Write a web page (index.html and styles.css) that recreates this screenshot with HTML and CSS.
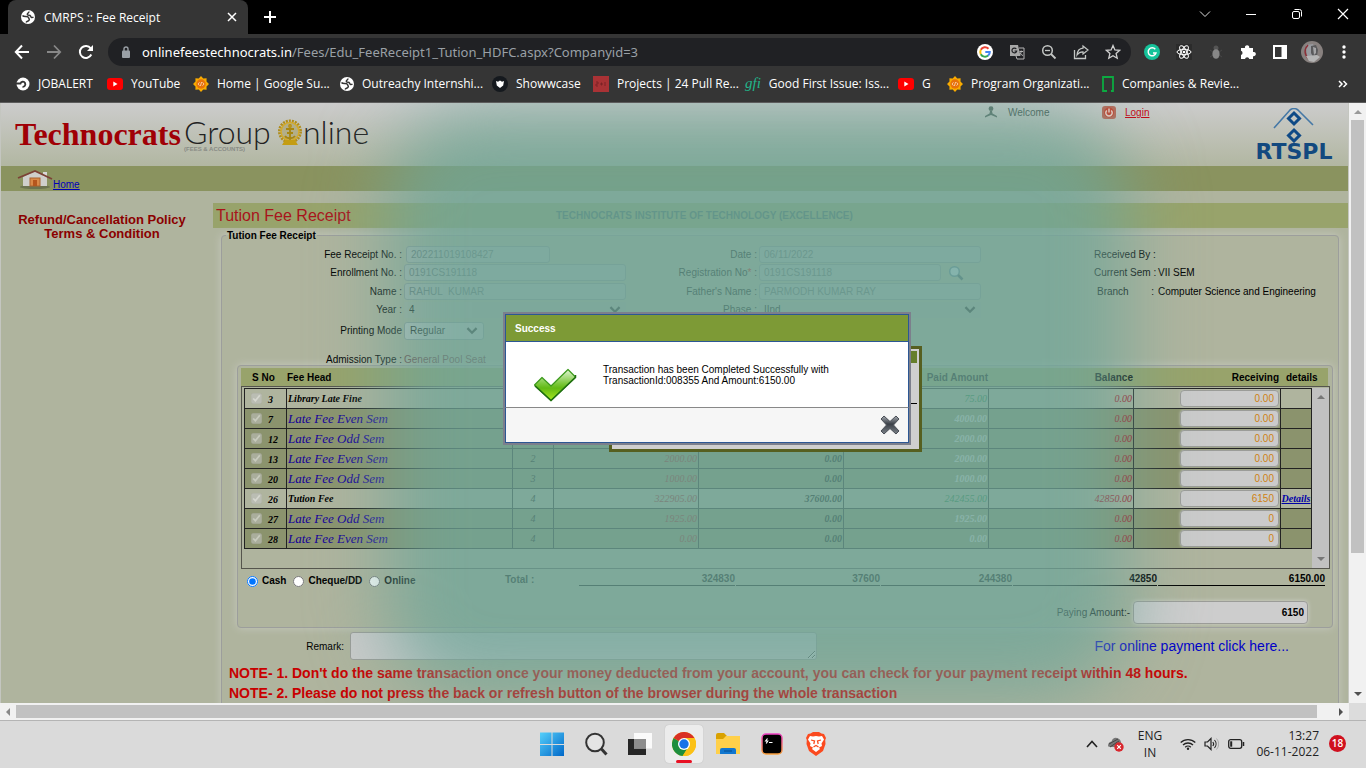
FILE: index.html
```html
<!DOCTYPE html>
<html lang="en">
<head>
<meta charset="utf-8">
<title>CMRPS :: Fee Receipt</title>
<link rel="stylesheet" href="styles.css">
</head>
<body>
<svg class="defs" aria-hidden="true">
  <defs>
    <symbol id="globe" viewBox="0 0 14 14"><circle cx="7" cy="7" r="7" fill="#fff"/><path d="M1.500 5.500C3 7.500 6.500 5.500 7.300 7.300S9 9 8 10.300 5.500 11 5.200 12.500M12.500 7C11 8 10 7.500 9.500 6S6.500 6 6.300 4.500 8 3 8 1.500" fill="none" stroke="#353535" stroke-width="1.500"/></symbol>
    <symbol id="yt" viewBox="0 0 16 12"><rect width="16" height="12" rx="3" fill="#f00"/><path d="M6.300 3.500v5l4.200-2.500z" fill="#fff"/></symbol>
    <symbol id="gsoc" viewBox="0 0 16 16"><path d="M8 0l2.300 2.400 3.300-.1-.1 3.300L16 8l-2.500 2.400.1 3.300-3.300-.1L8 16l-2.300-2.400-3.300.1.1-3.300L0 8l2.500-2.400-.1-3.300 3.300.1z" fill="#f9ab00"/><circle cx="8" cy="8" r="4.700" fill="#e8710a"/><path d="M6.500 6.300L5 8l1.500 1.700M9.500 6.300L11 8 9.500 9.700M8.600 6l-1.200 4" fill="none" stroke="#fff" stroke-width=".6"/></symbol>
    <symbol id="chev" viewBox="0 0 10 7"><path d="M1 1l4 4 4-4" fill="none" stroke="#222" stroke-width="2"/></symbol>
  </defs>
</svg>

<header class="browser">
  <div class="tabs">
    <div class="tab">
      <svg class="ic14"><use href="#globe"/></svg>
      <span class="tab-title">CMRPS :: Fee Receipt</span>
      <button class="bare" aria-label="Close tab"><svg width="10" height="10" viewBox="0 0 10 10"><path d="M1 1l8 8M9 1l-8 8" stroke="#fff" stroke-width="1.500"/></svg></button>
    </div>
    <button class="bare new-tab" aria-label="New tab"><svg width="12" height="12" viewBox="0 0 12 12"><path d="M6 0v12M0 6h12" stroke="#fff" stroke-width="2"/></svg></button>
    <div class="win">
      <button class="bare" aria-label="Search tabs"><svg width="12" height="12" viewBox="0 0 12 12"><path d="M1 3.500l5 5 5-5" fill="none" stroke="#ddd"/></svg></button>
      <button class="bare" aria-label="Minimise"><svg width="12" height="12" viewBox="0 0 12 12"><path d="M1 6.500h10" stroke="#fff"/></svg></button>
      <button class="bare" aria-label="Restore"><svg width="12" height="12" viewBox="0 0 12 12"><rect x="1.500" y="3.500" width="7" height="7" rx="1.500" fill="none" stroke="#fff"/><path d="M3.500 1.500h5a2 2 0 0 1 2 2v5" fill="none" stroke="#fff"/></svg></button>
      <button class="bare" aria-label="Close"><svg width="12" height="12" viewBox="0 0 12 12"><path d="M1 1l10 10M11 1L1 11" stroke="#fff" stroke-width="1.200"/></svg></button>
    </div>
  </div>

  <div class="toolbar">
    <button class="bare" aria-label="Back"><svg width="16" height="16" viewBox="0 0 16 16"><path d="M15 8H2M8 1.500L1.800 8 8 14.500" fill="none" stroke="#fff" stroke-width="2"/></svg></button>
    <button class="bare" aria-label="Forward"><svg width="16" height="16" viewBox="0 0 16 16"><path d="M1 8h13M8 1.500L14.200 8 8 14.500" fill="none" stroke="#888" stroke-width="1.800"/></svg></button>
    <button class="bare" aria-label="Reload"><svg width="16" height="16" viewBox="0 0 16 16"><path d="M13.300 10.500a6 6 0 1 1-.6-6.200" fill="none" stroke="#fff" stroke-width="2"/><path d="M15 1v6H9z" fill="#fff"/></svg></button>
    <div class="omni">
      <svg width="10" height="12" viewBox="0 0 10 12"><rect x="1" y="4.500" width="8" height="7.500" rx="1" fill="#9aa0a6"/><path d="M3 5V3a2 2 0 0 1 4 0v2" fill="none" stroke="#9aa0a6" stroke-width="1.400"/></svg>
      <span class="url"><b>onlinefeestechnocrats.in</b>/Fees/Edu_FeeReceipt1_Tution_HDFC.aspx?Companyid=3</span>
      <span class="omni-icons">
        <svg width="16" height="16" viewBox="0 0 16 16"><circle cx="8" cy="8" r="8" fill="#fff"/><path d="M11.500 4.700A4.800 4.800 0 0 0 3.800 5.800" fill="none" stroke="#ea4335" stroke-width="2"/><path d="M3.800 5.800a4.800 4.800 0 0 0 0 4.400" fill="none" stroke="#fbbc05" stroke-width="2"/><path d="M3.800 10.200a4.800 4.800 0 0 0 7.300 1.400" fill="none" stroke="#34a853" stroke-width="2"/><path d="M11.100 11.600A4.500 4.500 0 0 0 12.800 8H8.300" fill="none" stroke="#4285f4" stroke-width="2"/></svg>
        <svg width="16" height="16" viewBox="0 0 16 16"><path d="M10 4h5v11H8l-1-3" fill="none" stroke="#b5b5b5"/><path d="M1 1h8l2.500 11H1z" fill="#a8a8a8"/><path d="M7.300 5a2.400 2.400 0 1 0 .4 2H5.500" fill="none" stroke="#202124" stroke-width="1.200"/><path d="M10.500 7.500H14M12.200 6.500v1c-.2 1.500-.6 2.500-1 3M11 9c.6 1 1.500 2 3 2.500" fill="none" stroke="#b5b5b5"/></svg>
        <svg width="16" height="16" viewBox="0 0 16 16"><circle cx="6.500" cy="6.500" r="4.800" fill="none" stroke="#c4c7c5" stroke-width="1.500"/><path d="M10 10l4.500 4.500" stroke="#c4c7c5" stroke-width="1.800"/><path d="M4 6.500h5" stroke="#c4c7c5" stroke-width="1.300"/></svg>
        <svg width="16" height="16" viewBox="0 0 16 16"><path d="M1.500 6v8.500h11V11" fill="none" stroke="#c4c7c5" stroke-width="1.300"/><path d="M10 2l5 4-5 4V7.800C7 7.700 5.500 8.800 4 11c.3-3.500 2.300-6.500 6-6.800z" fill="none" stroke="#c4c7c5" stroke-width="1.200"/></svg>
        <svg width="16" height="16" viewBox="0 0 16 16"><path d="M8 1.500l1.900 4.400 4.800.4-3.600 3.200 1.100 4.700L8 11.700l-4.200 2.500 1.100-4.700L1.300 6.300l4.800-.4z" fill="none" stroke="#d0d0d0" stroke-width="1.300"/></svg>
      </span>
    </div>
    <div class="ext">
      <svg width="16" height="16" viewBox="0 0 16 16"><circle cx="8" cy="8" r="8" fill="#15c39a"/><path d="M11.300 5.300A4 4 0 1 0 12 9H9" fill="none" stroke="#fff" stroke-width="1.400"/></svg>
      <svg width="16" height="16" viewBox="0 0 16 16"><rect width="16" height="16" fill="#2b2b2b"/><g fill="none" stroke="#fff"><ellipse cx="8" cy="8" rx="7" ry="2.700"/><ellipse cx="8" cy="8" rx="7" ry="2.700" transform="rotate(60 8 8)"/><ellipse cx="8" cy="8" rx="7" ry="2.700" transform="rotate(120 8 8)"/></g><circle cx="8" cy="8" r="1.300" fill="#fff"/></svg>
      <svg width="16" height="16" viewBox="0 0 16 16"><path d="M2 6l3 2M14 6l-3 2M2 13l3-2M14 13l-3-2" stroke="#484848"/><circle cx="8" cy="4" r="2.500" fill="#555"/><ellipse cx="8" cy="10" rx="3.600" ry="4.800" fill="#888"/></svg>
      <svg width="16" height="16" viewBox="0 0 16 16"><path d="M1 4h4a2.200 2.200 0 1 1 4.200 0H13v4a2.200 2.200 0 1 1 0 4.200V15H9.300a2.200 2.200 0 0 0-4.300 0H1v-4a2.200 2.200 0 0 0 0-4.200z" fill="#fff"/></svg>
      <svg width="16" height="16" viewBox="0 0 16 16"><rect x="2" y="2" width="12" height="12" fill="#353535" stroke="#fff" stroke-width="2"/><path d="M9.500 1H15v14H9.500z" fill="#fff"/></svg>
      <svg class="avatar" width="22" height="22" viewBox="0 0 22 22"><circle cx="11" cy="11" r="11" fill="#88817f"/><path d="M5 4l7-1 2 5-1 6-7 3z" fill="#999ba0"/><path d="M7 4C3 8 3 14 8 18" fill="none" stroke="#8c3038" stroke-width="1.500"/><path d="M10 5l5-1 2 5-1 6-4 1-2-4z" fill="#5a5a5c"/><path d="M12 6l3 1v5l-2 2z" fill="#a5a5a7"/><path d="M5 15l11-1 3 2-6 5-5-1z" fill="#b5b5b5"/></svg>
      <svg width="4" height="16" viewBox="0 0 4 16"><circle cx="2" cy="3" r="1.700" fill="#fff"/><circle cx="2" cy="8" r="1.700" fill="#fff"/><circle cx="2" cy="13" r="1.700" fill="#fff"/></svg>
    </div>
  </div>

  <nav class="bookmarks">
    <a href="#" class="bm bm1"><svg width="14" height="14" viewBox="0 0 14 14"><circle cx="7" cy="7" r="6.500" fill="#fff"/><path d="M0 6.500h4.500C5 4.500 8 4 9 6s-.5 4-2.500 3.800" fill="none" stroke="#353535" stroke-width="1.800"/></svg>JOBALERT</a>
    <a href="#" class="bm bm2"><svg width="16" height="12"><use href="#yt"/></svg>YouTube</a>
    <a href="#" class="bm bm3"><svg width="16" height="16"><use href="#gsoc"/></svg>Home | Google Su...</a>
    <a href="#" class="bm bm4"><svg width="14" height="14"><use href="#globe"/></svg>Outreachy Internshi...</a>
    <a href="#" class="bm bm5"><svg width="16" height="16" viewBox="0 0 16 16"><circle cx="8" cy="8" r="8" fill="#15191e"/><path d="M4 5l2 .7L8 4.500l2 1.200L12 5l-.8 4.500L8 12 4.800 9.500z" fill="#fff"/></svg>Showwcase</a>
    <a href="#" class="bm bm6"><svg width="16" height="16" viewBox="0 0 16 16"><rect width="16" height="16" fill="#a93235"/><path d="M3 6h2v2H3v2h2M7 8h3M8.500 6.500v3M12 6v4" fill="none" stroke="#7c2226"/></svg>Projects | 24 Pull Re...</a>
    <a href="#" class="bm bm7"><i class="gfi">gfi</i>Good First Issue: Iss...</a>
    <a href="#" class="bm bm8"><svg width="16" height="12"><use href="#yt"/></svg>G</a>
    <a href="#" class="bm bm9"><svg width="16" height="16"><use href="#gsoc"/></svg>Program Organizati...</a>
    <a href="#" class="bm bm10"><svg width="12" height="16" viewBox="0 0 12 16"><path d="M5 15H1V1h10v14H9" fill="none" stroke="#0caa41" stroke-width="1.800"/></svg>Companies &amp; Revie...</a>
    <button class="bare more" aria-label="More bookmarks"><svg width="10" height="8" viewBox="0 0 10 8"><path d="M1 1l3 3-3 3M5.500 1l3 3-3 3" fill="none" stroke="#fff" stroke-width="1.500"/></svg></button>
  </nav>
</header>

<div class="viewport">
  <main class="page">
    <div class="masthead">
      <div class="logo">
        <span class="logo-red">Technocrats</span>
        <span class="logo-group"><span>Group</span><small>(FEES &amp; ACCOUNTS)</small></span>
        <svg class="gear" width="26" height="28" viewBox="0 0 26 28"><circle cx="13" cy="12.500" r="10.500" fill="none" stroke="#b08d1c" stroke-width="3" stroke-dasharray="2 1"/><circle cx="13" cy="12.500" r="9" fill="#b3ae88" stroke="#d2aa2c" stroke-width="1.500"/><path d="M13 5v17M9 10h8M10 14h6M8 17c2 3 8 3 10 0" fill="none" stroke="#a88710" stroke-width="1.800"/><circle cx="13" cy="7" r="2" fill="#b9941b"/><path d="M5 26l3-5h10l3 5z" fill="#c49d13"/></svg>
        <span class="logo-online">nline</span>
      </div>
      <div class="user">
        <svg width="12" height="12" viewBox="0 0 12 12"><circle cx="6" cy="2.700" r="2.400" fill="#556860"/><path d="M5 5h2l.5 2.500L12 10v1.500L6 9 0 11.500V10l4.500-2.500z" fill="#556860"/></svg>
        <span>Welcome</span>
      </div>
      <div class="user login">
        <svg width="14" height="13" viewBox="0 0 14 13"><rect width="14" height="13" rx="3" fill="#b96655"/><circle cx="7" cy="6.500" r="5" fill="#c7402d"/><path d="M4.800 4.500a3.200 3.200 0 1 0 4.400 0M7 2.500v4" fill="none" stroke="#f2d8d0" stroke-width="1.400"/></svg>
        <a href="#">Login</a>
      </div>
      <div class="rtspl">
        <svg width="42" height="35" viewBox="0 0 42 35"><path d="M1 20L17 2q4-3 8 0l15 15" fill="none" stroke="#4578a6" stroke-width="1.600"/><path d="M21 5l5.500 5.500L21 16l-5.500-5.500zM21 22l5.500 5.500L21 33l-5.500-5.500z" fill="none" stroke="#0f4a86" stroke-width="3"/></svg>
        <span>RTSPL</span>
      </div>
    </div>
    <nav class="menu">
      <svg width="36" height="20" viewBox="0 0 36 20"><ellipse cx="18" cy="17" rx="15" ry="2" fill="#6c734f"/><path d="M6 7l12-6 12 6v9H6z" fill="#cfcfcb"/><path d="M26 2h4v5h-4z" fill="#d8d8d8"/><path d="M1 8L18 1l17 8" fill="none" stroke="#7c4236" stroke-width="1.800"/><rect x="13" y="8" width="10" height="8" fill="#d98948" stroke="#a9622f"/><path d="M16 10h4v6h-4z" fill="#b5561d"/></svg>
      <a href="#">Home</a>
    </nav>

    <div class="columns">
      <aside class="side"><a href="#">Refund/Cancellation Policy</a><a href="#">Terms &amp; Condition</a></aside>
      <section class="content">
        <div class="title"><h1>Tution Fee Receipt</h1><strong>TECHNOCRATS INSTITUTE OF TECHNOLOGY (EXCELLENCE)</strong></div>
        <fieldset class="outer">
          <legend>Tution Fee Receipt</legend>
          <div class="form">
            <label for="rno">Fee Receipt No. :</label><input id="rno" class="short" value="202211019108427" disabled>
            <label for="date">Date :</label><input id="date" value="06/11/2022" disabled>
            <span class="info">Received By :</span><span></span>

            <label for="eno">Enrollment No. :</label><input id="eno" value="0191CS191118" disabled>
            <label for="reg">Registration No<em>*</em> :</label>
            <span class="with-search"><input id="reg" value="0191CS191118" disabled><button class="bare" aria-label="Search"><svg width="16" height="16" viewBox="0 0 16 16"><circle cx="6.500" cy="6.500" r="4.800" fill="#cde0ec" stroke="#5a7e94" stroke-width="1.500"/><path d="M10 10l4.500 4.500" stroke="#3d5560" stroke-width="2.500"/></svg></button></span>
            <span class="info">Current Sem :</span><span>VII SEM</span>

            <label for="nm">Name :</label><input id="nm" value="RAHUL  KUMAR" disabled>
            <label for="fn">Father's Name :</label><input id="fn" value="PARMODH KUMAR RAY" disabled>
            <span class="info branch"><span>Branch</span><span>:</span></span><span>Computer Science and Engineering</span>

            <label for="yr">Year :</label><span class="sel flat"><select id="yr"><option>4</option></select><svg width="12" height="8"><use href="#chev"/></svg></span>
            <label for="ph">Phase :</label><span class="sel flat"><select id="ph"><option>IInd</option></select><svg width="12" height="8"><use href="#chev"/></svg></span>
            <span></span><span></span>

            <label for="pm">Printing Mode</label><span class="sel mode"><select id="pm"><option>Regular</option></select><svg width="12" height="8"><use href="#chev"/></svg></span>
            <span></span><span></span><span></span><span></span>

            <span class="lab">Admission Type :</span><span class="pool">General Pool Seat</span>
          </div>

          <div class="inner">
            <div class="thead"><b class="c1">S No</b><b class="c2">Fee Head</b><b class="c5">Paid Amount</b><b class="c6">Balance</b><b class="c7">Receiving</b><b class="c8">details</b></div>
            <div class="scrollbox">
              <table>
                <colgroup><col class="w-no"><col class="w-head"><col class="w-sem"><col class="w-amt"><col class="w-amt"><col class="w-amt"><col class="w-amt"><col><col class="w-det"></colgroup>
                <tbody>
                <tr class="lite"><td><label><input type="checkbox" checked disabled><span>3</span></label></td><td>Library Late Fine</td><td></td><td></td><td></td><td>75.00</td><td>0.00</td><td><input value="0.00" aria-label="Receiving 3"></td><td></td></tr>
                <tr><td><label><input type="checkbox" checked disabled><span>7</span></label></td><td>Late Fee Even Sem</td><td></td><td></td><td></td><td>4000.00</td><td>0.00</td><td><input value="0.00" aria-label="Receiving 7"></td><td></td></tr>
                <tr><td><label><input type="checkbox" checked disabled><span>12</span></label></td><td>Late Fee Odd Sem</td><td></td><td></td><td></td><td>2000.00</td><td>0.00</td><td><input value="0.00" aria-label="Receiving 12"></td><td></td></tr>
                <tr><td><label><input type="checkbox" checked disabled><span>13</span></label></td><td>Late Fee Even Sem</td><td>2</td><td>2000.00</td><td>0.00</td><td>2000.00</td><td>0.00</td><td><input value="0.00" aria-label="Receiving 13"></td><td></td></tr>
                <tr><td><label><input type="checkbox" checked disabled><span>20</span></label></td><td>Late Fee Odd Sem</td><td>3</td><td>1000.00</td><td>0.00</td><td>1000.00</td><td>0.00</td><td><input value="0.00" aria-label="Receiving 20"></td><td></td></tr>
                <tr class="lite"><td><label><input type="checkbox" checked disabled><span>26</span></label></td><td>Tution Fee</td><td>4</td><td>322905.00</td><td>37600.00</td><td>242455.00</td><td>42850.00</td><td><input value="6150" aria-label="Receiving 26"></td><td><a href="#">Details</a></td></tr>
                <tr><td><label><input type="checkbox" checked disabled><span>27</span></label></td><td>Late Fee Odd Sem</td><td>4</td><td>1925.00</td><td>0.00</td><td>1925.00</td><td>0.00</td><td><input value="0" aria-label="Receiving 27"></td><td></td></tr>
                <tr><td><label><input type="checkbox" checked disabled><span>28</span></label></td><td>Late Fee Even Sem</td><td>4</td><td>0.00</td><td>0.00</td><td>0.00</td><td>0.00</td><td><input value="0" aria-label="Receiving 28"></td><td></td></tr>
                </tbody>
              </table>
              <div class="vbar"><i class="up"></i><i class="down"></i></div>
            </div>
            <div class="totals">
              <div class="pay">
                <label><input type="radio" name="p" checked>Cash</label><label><input type="radio" name="p">Cheque/DD</label><label><input type="radio" name="p">Online</label>
              </div>
              <b class="t-label">Total :</b>
              <b class="sum s1">324830</b><b class="sum s2">37600</b><b class="sum s3">244380</b><b class="sum s4">42850</b><b class="sum s5">6150.00</b>
            </div>
            <div class="paying"><label for="pa">Paying Amount:-</label><input id="pa" value="6150"></div>
          </div>

          <div class="remark"><label for="rm">Remark:</label><textarea id="rm"></textarea><a href="#">For online payment click here...</a></div>
          <p class="note">NOTE- 1. Don't do the same transaction once your money deducted from your account, you can check for your payment receipt within 48 hours.</p>
          <p class="note">NOTE- 2. Please do not press the back or refresh button of the browser during the whole transaction</p>
        </fieldset>
      </section>
    </div>

    <div class="glow"></div>
    <div class="back-dialog"><div class="bd-head"></div><div class="bd-line"></div></div>
    <div class="dialog" role="dialog" aria-labelledby="dt">
      <h2 id="dt">Success</h2>
      <div class="dialog-body">
        <svg width="44" height="34" viewBox="0 0 44 34"><defs><linearGradient id="tick" x1="0" y1="0" x2="0" y2="1"><stop offset="0" stop-color="#e2f6d6"/><stop offset=".45" stop-color="#7cc83c"/><stop offset=".6" stop-color="#62ba14"/><stop offset="1" stop-color="#a8e820"/></linearGradient></defs><path d="M1.500 17l7.500-7.500 9 8.500L35 1.500l7.500 7.500L18 32.500z" fill="url(#tick)" stroke="#3c9a1c" stroke-width="1.200" stroke-linejoin="round"/><path d="M2 18l16 14.500L42.500 9.500V7" fill="none" stroke="#1f6e10" stroke-width="1.500"/></svg>
        <p>Transaction has been Completed Successfully with TransactionId:008355 And Amount:6150.00</p>
      </div>
      <div class="dialog-foot"><button class="bare" aria-label="Close message"><svg width="20" height="20" viewBox="0 0 20 20"><defs><linearGradient id="xg" x1="0" y1="0" x2="0" y2="1"><stop offset="0" stop-color="#a5aab0"/><stop offset=".45" stop-color="#3a3f47"/><stop offset="1" stop-color="#7d838a"/></linearGradient></defs><path d="M4 1l6 5.500L16 1l3 3-5.500 6 5.500 6-3 3-6-5.500L4 19l-3-3 5.500-6L1 4z" fill="url(#xg)" stroke="#4a4f57" stroke-linejoin="round"/></svg></button></div>
    </div>
  </main>
  <div class="scroll-v"><i class="up"></i><span></span><i class="down"></i></div>
  <div class="scroll-h"><i class="left"></i><span></span><i class="right"></i></div>
  <div class="scroll-c"></div>
</div>

<footer class="taskbar">
  <div></div>
  <div class="apps">
    <button class="bare app" aria-label="Start"><svg width="24" height="24" viewBox="0 0 24 24"><defs><linearGradient id="wg" x1="0" y1="0" x2="1" y2="1"><stop offset="0" stop-color="#55d0fb"/><stop offset="1" stop-color="#0067c8"/></linearGradient></defs><path d="M0 .5h11.500V12H0zM12.500.5H24V12H12.500zM0 13h11.500v11H0zM12.500 13H24v11H12.500z" fill="url(#wg)"/></svg></button>
    <button class="bare app" aria-label="Search"><svg width="24" height="24" viewBox="0 0 24 24"><circle cx="11" cy="10.500" r="8.800" fill="#e4e4e4" stroke="#333" stroke-width="2"/><path d="M17.500 17l5 5.500" stroke="#333" stroke-width="3"/></svg></button>
    <button class="bare app" aria-label="Task view"><svg width="24" height="24" viewBox="0 0 24 24"><rect y="7" width="18" height="16" fill="#262626"/><rect x="6" y="1" width="18" height="15.500" fill="#fff" fill-opacity=".85"/><rect x="6" y="7" width="12" height="9.500" fill="#8d8d8d"/></svg></button>
    <button class="bare app on" aria-label="Chrome"><svg width="24" height="24" viewBox="0 0 24 24"><circle cx="12" cy="12" r="12" fill="#fbc116"/><path d="M12 12L1.600 6a12 12 0 0 0 9 18l6-9.300z" fill="#1e8e3e"/><path d="M12 12L1.600 6a12 12 0 0 1 20.800 0z" fill="#d93025"/><path d="M12 6h10.400a12 12 0 0 1-11.800 18L17 14z" fill="#fbc116"/><circle cx="12" cy="12" r="6" fill="#fff"/><circle cx="12" cy="12" r="4.700" fill="#1a73e8"/></svg></button>
    <button class="bare app" aria-label="File Explorer"><svg width="24" height="22" viewBox="0 0 24 22"><path d="M0 2a2 2 0 0 1 2-2h6l3 3h13v8H0z" fill="#d9a100"/><path d="M0 6h7l3-3h14v18H0z" fill="#ffd04a"/><path d="M4 21v-4a2 2 0 0 1 2-2h12a2 2 0 0 1 2 2v4z" fill="#1277cf"/><path d="M8 18h8" stroke="#0a5aa5" stroke-width="1.500"/></svg></button>
    <button class="bare app" aria-label="Terminal"><svg width="22" height="22" viewBox="0 0 22 22"><defs><linearGradient id="tg" x1="0" y1="0" x2="0" y2="1"><stop offset="0" stop-color="#ee3fc4"/><stop offset="1" stop-color="#f9a13c"/></linearGradient></defs><rect x="1" y="1" width="20" height="20" rx="4" fill="#000" stroke="url(#tg)" stroke-width="1.500"/><path d="M6.500 5.500L4.700 8h2l-1.500 2.500M8 9.500h3.500" fill="none" stroke="#fff" stroke-width="1.200"/></svg></button>
    <button class="bare app" aria-label="Brave"><svg width="20" height="24" viewBox="0 0 20 24"><path d="M4.500 1.500L7 0h6l2.500 1.500L18 2l2 4-.8 2 .3 4-2.500 7-7 5-7-5L.5 12l.3-4L0 6l2-4z" fill="#fb4a1f"/><path d="M10 4l3 .5 3-.5 2 3.500-2.500 4L16 14l-3 1.500 1 1.500-4 3-4-3 1-1.500L4 14l.5-2.500L2 7.500 4 4l3 .5z" fill="#fff"/><path d="M5 8l3.500 1-.7 3M15 8l-3.500 1 .7 3M7.500 15L10 13.500l2.500 1.500" fill="none" stroke="#fb4a1f" stroke-width="1.300"/></svg></button>
  </div>
  <div class="tray">
    <svg width="12" height="8" viewBox="0 0 12 8"><path d="M1 7l5-5.500L11 7" fill="none" stroke="#222" stroke-width="1.600"/></svg>
    <svg class="cloud" width="17" height="16" viewBox="0 0 17 16"><path d="M1 10q0-4 3.500-4.500Q6 1 10 2t4 5v4H4q-3 0-3-1z" fill="#777"/><path d="M2 8l9-5M3 11l9-6" stroke="#444"/><circle cx="12" cy="11" r="4.700" fill="#d9272e"/><path d="M10.200 9.200l3.600 3.600M13.800 9.200l-3.600 3.600" stroke="#fff" stroke-width="1.200"/></svg>
    <span class="lang">ENG<br>IN</span>
    <svg width="16" height="12" viewBox="0 0 16 12"><path d="M.7 4.500a10.500 10.500 0 0 1 14.600 0M3 7a7.200 7.200 0 0 1 10 0M5.200 9.200a4 4 0 0 1 5.600 0" fill="none" stroke="#222" stroke-width="1.300"/><circle cx="8" cy="10.800" r="1.200" fill="#222"/></svg>
    <svg class="vol" width="15" height="14" viewBox="0 0 15 14"><path d="M1 5h2.500L7 1.500v11L3.500 9H1z" fill="none" stroke="#222" stroke-width="1.200"/><path d="M8.800 5a3 3 0 0 1 0 4M10.500 3a6 6 0 0 1 0 8" fill="none" stroke="#222" stroke-width="1.100"/><path d="M12.500 1.500a8 8 0 0 1 0 11" fill="none" stroke="#aaa"/></svg>
    <svg width="17" height="10" viewBox="0 0 17 10"><rect x=".7" y=".7" width="13" height="8.600" rx="2" fill="none" stroke="#222" stroke-width="1.300"/><rect x="2.200" y="2.300" width="2" height="5.400" fill="#222"/><path d="M15.500 3v4" stroke="#222" stroke-width="1.500"/></svg>
    <span class="clock">13:27<br>06-11-2022</span>
    <span class="badge">18</span>
  </div>
</footer>
</body>
</html>
```
FILE: styles.css
```css
* { box-sizing: border-box; }
html, body { margin: 0; height: 100%; }
body {
  display: flex; flex-direction: column; overflow: hidden;
  font: 10px "Liberation Sans", Arial, sans-serif; color: #000;
}
svg { flex: none; display: block; }
.defs { position: absolute; width: 0; height: 0; }
.bare { border: 0; padding: 0; background: none; flex: none; display: grid; place-items: center; }
input, select, textarea { font: inherit; color: inherit; margin: 0; }

/* browser window */
.browser { flex: none; background: #353535; border-bottom: 1px solid #5c5c5c; color: #fff; font-family: "Open Sans", "Noto Sans", sans-serif; font-size: 12px; }
.tabs { height: 34px; background: #000; display: flex; align-items: center; padding-left: 8px; }
.tab { width: 240px; height: 34px; background: #353535; border-radius: 8px 8px 0 0; display: flex; align-items: center; padding: 0 11px 0 13px; }
.ic14 { width: 14px; height: 14px; }
.tab-title { flex: 1; padding-left: 9px; font-size: 12px; }
.new-tab { margin-left: 16px; }
.win { margin-left: auto; display: flex; gap: 34px; padding: 0 17px 6px 0; }
.toolbar { height: 35px; display: flex; align-items: center; padding: 0 20px 0 14px; gap: 16px; }
.omni { flex: 1; height: 28px; border-radius: 14px; background: #202124; display: flex; align-items: center; padding: 0 10px 0 13px; margin-left: -2px; }
.url { flex: 1; padding-left: 11px; color: #9aa0a6; font-size: 13px; white-space: nowrap; overflow: hidden; font-family: "Noto Sans", sans-serif; }
.url b { font-weight: 400; color: #fff; }
.omni-icons, .ext { display: flex; align-items: center; gap: 16px; }
.ext { margin-left: -3px; }
.avatar { margin: 0 3px 0 -3px; }
.bookmarks { height: 33px; display: flex; align-items: center; padding: 0 18px 4px 16px; }
.bm { color: #fff; text-decoration: none; display: flex; align-items: center; gap: 8px; white-space: nowrap; flex: none; }
.bm1 { width: 91px; }
.bm2 { width: 86px; }
.bm3 { width: 147px; }
.bm4 { width: 152px; }
.bm5 { width: 101px; }
.bm6 { width: 152px; }
.bm7 { width: 153px; }
.bm8 { width: 49px; }
.bm9 { width: 155px; }
.gfi { color: #22b58a; font: italic 15px "Liberation Serif", serif; }
.more { margin-left: auto; }

/* page viewport */
.viewport { flex: 1; min-height: 0; display: grid; grid-template: minmax(0, 1fr) 17px / minmax(0, 1fr) 17px; background: #f1f1f1; }
.page {
  position: relative; overflow: hidden; border-left: 1px solid #c4c6c0; border-right: 1px solid #c4c6c0;
  background: linear-gradient(#cccccc 0, #b2b7a2 62px, #afb49e 90px);
}
.scroll-v { display: flex; flex-direction: column; align-items: center; justify-content: space-between; padding: 7px 1px; }
.scroll-v span { flex: 1; width: 13px; margin: 6px 0 139px; background: #c1c1c1; }
.scroll-h { display: flex; align-items: center; padding: 0 6px; }
.scroll-h span { flex: 1; height: 13px; margin: 0 22px 0 6px; background: #c1c1c1; }
.scroll-c { background: #dcdcdc; }
.up, .down, .left, .right { width: 0; height: 0; border: 4px solid transparent; flex: none; }
.up { border-bottom-color: #999; border-top: 0; }
.down { border-top-color: #505050; border-bottom: 0; }
.left { border-right-color: #888; border-left: 0; }
.right { border-left-color: #505050; border-right: 0; }

.masthead { height: 63px; display: flex; align-items: flex-start; padding: 0 14px 0 14px; }
.logo { display: flex; align-items: flex-start; flex: 1; padding-top: 12px; height: 63px; }
.logo-red { color: #a00006; font: bold 32px/38px "Liberation Serif", serif; width: 169px; }
.logo-group, .logo-online { font: 300 32px/34px Lato, sans-serif; color: #222; }
.logo-group { width: 93px; display: flex; flex-direction: column; }
.logo-group small { font: bold 6px/6px "Liberation Sans", sans-serif; color: #888b85; margin-top: -3px; white-space: nowrap; }
.gear { margin-top: 4px; }
.user { display: flex; gap: 11px; align-items: center; padding-top: 3px; color: #3e4f49; width: 117px; }
.login { width: 152px; gap: 9px; }
.login a { color: #c8000f; }
.rtspl { width: 80px; display: flex; flex-direction: column; align-items: center; padding-top: 5px; color: #12497f; font: bold 22px/17px "DejaVu Sans", sans-serif; }
.menu { height: 25px; background: #8a935f; display: flex; align-items: flex-end; padding: 0 0 1px 16px; }
.menu a { color: #0000b8; font-size: 10px; line-height: 11px; }

.columns { display: grid; grid-template-columns: 212px minmax(0, 1fr); padding-top: 12px; }
.side { padding-top: 10px; display: flex; flex-direction: column; align-items: center; padding-right: 10px; }
.side a { color: #8b0000; font: bold 13px/14px "Liberation Sans", sans-serif; text-decoration: none; white-space: nowrap; }
.title { height: 25px; background: #98a36b; display: grid; grid-template-columns: 340px 1fr; align-items: center; padding-left: 3px; color: #3d625c; }
.title strong { font-size: 10px; }
.title h1 { margin: 0; font: 16px "Liberation Sans", sans-serif; color: #a8141c; }
.content { min-width: 0; }
.outer { margin: 2px 9px 0 8px; padding: 0 5px 20px 15px; border: 1px solid #9c9e9c; border-radius: 4px; min-width: 0; box-shadow: 0 0 8px #c6c8be; }
.outer legend { font-weight: bold; margin-left: -11px; padding: 0 1px; line-height: 11px; }

.form { display: grid; grid-template-columns: 165px 222px 129px 222px 173px 1fr; grid-template-rows: 18px 19px 18px 19px 23px 23px; column-gap: 2px; align-items: center; padding-top: 4px; white-space: nowrap; }
.form label, .lab { text-align: right; }
.form em { color: #c00; font-style: normal; }
.info { text-align: left; justify-self: end; width: 62px; }
.branch { display: flex; justify-content: space-between; padding: 0 2px 0 3px; }
.form input { height: 17px; width: 100%; padding: 0 4px; border: 1px solid #8f9998; border-radius: 3px; background: #b2b8b4; color: #5e6c6e; }
.form .short { width: 144px; margin-left: 2px; }
.with-search { display: grid; grid-template-columns: 182px 16px; column-gap: 7px; }
.sel { position: relative; display: grid; align-items: center; }
.sel select { appearance: none; border: 0; background: none; padding: 0 5px; width: 100%; height: 16px; }
.sel svg { position: absolute; right: 5px; pointer-events: none; }
.flat { background: #adb3a4; }
.mode { width: 80px; height: 18px; border: 1px solid #8f9998; border-radius: 3px; background: #c6c8c6; }
.lab, .pool { align-self: end; }
.pool { color: #6a2a30; }

.inner { border: 1px solid #9c9e9c; border-radius: 4px; padding: 2px 2px 0 3px; height: 263px; box-shadow: 0 0 8px #c6c8be; }
.thead { height: 18px; margin-right: 2px; background: #98a36b; display: grid; grid-template-columns: 45px 1fr 300px 145px 146px 49px; align-items: center; text-align: right; }
.thead .c1 { text-align: center; }
.thead .c2 { text-align: left; padding-left: 1px; }
.thead .c8 { text-align: left; padding-left: 7px; }
.scrollbox { border: 1px solid #55554d; height: 183px; padding: 1px 0 0 2px; display: flex; }
table { border-collapse: collapse; table-layout: fixed; flex: 1; width: 0; align-self: flex-start; font: italic bold 10px "Liberation Serif", serif; }
.w-no { width: 42px; } .w-head { width: 226px; } .w-sem { width: 41px; } .w-amt { width: 145px; } .w-det { width: 31px; }
td { border: 1px solid #222; height: 20px; padding: 0 1px; text-align: right; line-height: 12px; white-space: nowrap; }
tr { background: #8b936d; height: 20px; }
tr.lite { background: none; }
td label { display: flex; align-items: center; padding-left: 5px; gap: 6px; }
td label input { width: 11px; height: 11px; margin: 0; opacity: .7; }
td label span { padding-top: 3px; }
td:nth-child(2) { text-align: left; font-size: 13px; color: #14009a; font-weight: 400; }
.lite td:nth-child(2) { font-size: 10px; color: #000; font-weight: bold; }
td:nth-child(3) { text-align: center; font-weight: 400; }
td:nth-child(4) { color: #a01018; font-weight: 400; }
td:nth-child(6) { color: #ddd; }
.lite td:nth-child(6) { color: #0a7434; font-weight: 400; }
td:nth-child(7) { color: #a80014; font-weight: 400; }
td:nth-child(8) input { width: 99px; height: 17px; display: block; margin-left: auto; border: 1px solid #9b9c98; border-radius: 4px; background: #cbcbcb; color: #cf8212; font: 10px "Liberation Sans", sans-serif; text-align: right; padding: 0 4px; box-shadow: 0 0 3px #c0c2b8; }
td:last-child { padding: 0; text-align: center; }
td a { color: #0000a8; }
.vbar { width: 17px; background: #c1c1c1; display: flex; flex-direction: column; align-items: center; justify-content: space-between; padding: 7px 0; }
.vbar .up { border-bottom-color: #777; } .vbar .down { border-top-color: #777; }

.totals { display: grid; grid-template-columns: 264px 74px 157px 145px 132px 145px 1fr; align-items: start; padding: 4px 4px 0 0; height: 32px; }
.pay { display: flex; gap: 7px; padding: 0 0 0 6px; font-weight: bold; }
.pay label { display: flex; align-items: center; gap: 4px; line-height: 16px; white-space: nowrap; }
.pay input { width: 11px; height: 11px; }
.sum { text-align: right; border-bottom: 1px solid #000; line-height: 12px; margin-right: 1px; }
.t-label { line-height: 14px; }
.paying { display: flex; justify-content: flex-end; align-items: center; gap: 3px; padding-right: 22px; }
.paying input { width: 175px; height: 23px; border: 1px solid #9b9c98; border-radius: 4px; background: #cdcdcd; text-align: right; font-weight: bold; padding: 0 3px; box-shadow: 0 0 4px #d0d2ca; }
.remark { display: grid; grid-template-columns: 107px 467px 1fr; column-gap: 6px; align-items: center; padding: 4px 44px 0 0; }
.remark label { text-align: right; }
.remark textarea { height: 28px; border: 1px solid #9b9c98; border-radius: 3px; background: #cbcbcb; display: block; width: 100%; }
.remark a { text-align: right; color: #0000c8; font-size: 14px; text-decoration: none; }
.note { margin: 0 0 0 -8px; color: #c80000; font: bold 14px/20px "Liberation Sans", sans-serif; white-space: nowrap; }
.note:first-of-type { margin-top: 3px; }

/* modal haze and dialogs, over the page */
.glow { position: absolute; left: 385px; right: 220px; top: 5px; bottom: 5px; background: rgba(110, 165, 152, .77); border-radius: 90px; filter: blur(36px); pointer-events: none; }
.back-dialog { position: absolute; left: 608px; top: 243px; width: 313px; height: 106px; border: 3px solid #565f20; background: #cfcfcf; padding: 2px; }
.bd-head { height: 12px; background: #667f2b; }
.bd-line { border-bottom: 1px solid #000; height: 41px; }
.dialog { position: absolute; left: 502px; top: 209px; width: 408px; border: 2px solid #7c7f8c; background: #fff; }
.dialog h2 { margin: 0; height: 28px; background: #7d9a36; border: 1px solid #2c5794; color: #fff; font: bold 10px/27px "Liberation Sans", sans-serif; padding-left: 9px; }
.dialog-body { height: 65px; display: flex; align-items: flex-start; gap: 26px; padding: 22px 60px 0 27px; border: solid #2c5794; border-width: 0 1px; }
.dialog-body svg { margin-top: 4px; }
.dialog-body p { margin: 0; line-height: 11px; }
.dialog-foot { height: 36px; background: #f6f6f6; border: 1px solid #2c5794; border-top-color: #888; display: flex; justify-content: flex-end; align-items: center; padding-right: 8px; }

/* taskbar */
.taskbar { flex: none; height: 48px; background: #dadada; border-top: 1px solid #b4b4b4; display: grid; grid-template-columns: 1fr auto 1fr; align-items: center; font: 12px/16px "Open Sans", "Noto Sans", sans-serif; color: #222; }
.apps { display: flex; gap: 6px; padding: 0 0 2px 2px; }
.app { width: 38px; height: 38px; border-radius: 4px; position: relative; }
.on { background: #ececec; box-shadow: 0 0 1px #aaa; }
.on::after { content: ""; position: absolute; bottom: 0; width: 16px; height: 3px; border-radius: 2px; background: #e81123; }
.tray { display: flex; align-items: center; justify-content: flex-end; padding: 0 20px 2px 0; }
.cloud { margin-left: 9px; }
.lang { text-align: center; width: 40px; margin: 0 10px 0 6px; line-height: 17px; }
.vol { margin: 0 9px 0 8px; }
.clock { text-align: right; width: 74px; }
.badge { width: 17px; height: 17px; margin-left: 10px; border-radius: 9px; background: #d0101f; color: #fff; font-size: 10px; line-height: 17px; text-align: center; font-weight: 600; }
```
